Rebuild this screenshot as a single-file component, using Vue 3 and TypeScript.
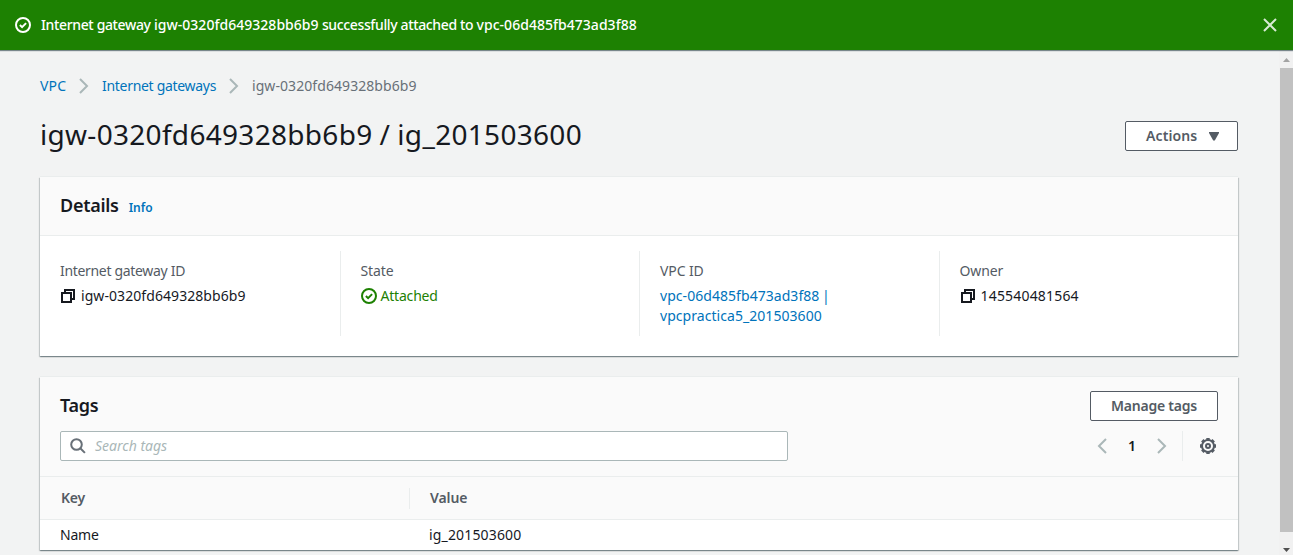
<script setup lang="ts">
interface Tag {
  key: string
  value: string
}

const gatewayId = 'igw-0320fd649328bb6b9'
const tags: Tag[] = [{ key: 'Name', value: 'ig_201503600' }]
</script>

<template>
  <div class="page">
    <div class="flash">
      <svg class="status" viewBox="0 0 16 16"><circle cx="8" cy="8" r="7" /><path d="M4.9 8l2.2 2.1 4-4" /></svg>
      <span class="flash-text">Internet gateway <span class="id">{{ gatewayId }}</span> successfully attached to <span class="id">vpc-06d485fb473ad3f88</span></span>
      <svg class="close" viewBox="0 0 14 14"><path d="M1 1l12 12M13 1L1 13" /></svg>
    </div>
    <div class="viewport">
      <main class="content">
        <nav class="crumbs">
          <a class="link c1">VPC</a>
          <svg class="sep" viewBox="0 0 10 16"><path d="M1 1l7 7-7 7" /></svg>
          <a class="link c2">Internet gateways</a>
          <svg class="sep" viewBox="0 0 10 16"><path d="M1 1l7 7-7 7" /></svg>
          <span class="c3">{{ gatewayId }}</span>
        </nav>
        <div class="title-row">
          <h1>{{ gatewayId }} / ig_201503600</h1>
          <button class="btn actions"><span>Actions</span><svg class="caret" viewBox="0 0 10 9"><path d="M0 0h10v1L5.8 8.5H4.2L0 1z" /></svg></button>
        </div>
        <section class="card">
          <header class="details-head">
            <h2>Details</h2>
            <a class="info">Info</a>
          </header>
          <div class="columns">
            <div class="col">
              <div class="label l1">Internet gateway ID</div>
              <div class="value"><svg class="copy" viewBox="0 0 14 14"><path d="M1 4h9v9H1zM4 3V1h9v9h-3" /></svg><span class="v1">{{ gatewayId }}</span></div>
            </div>
            <div class="col">
              <div class="label">State</div>
              <div class="value ok"><svg class="status" viewBox="0 0 16 16"><circle cx="8" cy="8" r="7" /><path d="M4.9 8l2.2 2.1 4-4" /></svg><span>Attached</span></div>
            </div>
            <div class="col">
              <div class="label">VPC ID</div>
              <div class="value link vpc">vpc-06d485fb473ad3f88 |<br />vpcpractica5_201503600</div>
            </div>
            <div class="col">
              <div class="label">Owner</div>
              <div class="value"><svg class="copy" viewBox="0 0 14 14"><path d="M1 4h9v9H1zM4 3V1h9v9h-3" /></svg><span class="owner">145540481564</span></div>
            </div>
          </div>
        </section>
        <section class="card tags">
          <header class="tags-head">
            <div class="head-row">
              <h2>Tags</h2>
              <button class="btn manage"><span>Manage tags</span></button>
            </div>
            <div class="tools">
              <div class="search">
                <svg class="glass" viewBox="0 0 16 16"><circle cx="6.5" cy="6.5" r="5.3" /><path d="M10.3 10.3l4.6 4.6" /></svg>
                <span>Search tags</span>
              </div>
              <div class="pager">
                <svg class="arrow" viewBox="0 0 10 16"><path d="M9 1L2 8l7 7" /></svg>
                <span class="num">1</span>
                <svg class="arrow" viewBox="0 0 10 16"><path d="M1 1l7 7-7 7" /></svg>
                <i class="rule"></i>
                <svg class="gear" viewBox="0 0 16 16">
                  <circle cx="8" cy="8" r="6" />
                  <path class="teeth" d="M8 0v2M8 14v2M0 8h2M14 8h2M2.3 2.3l1.5 1.5M12.2 12.2l1.5 1.5M13.7 2.3l-1.5 1.5M3.8 12.2l-1.5 1.5" />
                  <circle cx="8" cy="8" r="2" />
                </svg>
              </div>
            </div>
          </header>
          <div class="row head"><span class="cell">Key</span><span class="cell second">Value</span></div>
          <div v-for="tag in tags" :key="tag.key" class="row"><span class="cell">{{ tag.key }}</span><span class="cell second">{{ tag.value }}</span></div>
        </section>
      </main>
      <aside class="scrollbar">
        <svg class="tri" viewBox="0 0 7 4"><path d="M0 4h7L3.5 0z" fill="#a3a3a3" /></svg>
        <div class="thumb"></div>
        <svg class="tri" viewBox="0 0 7 4"><path d="M0 0h7L3.5 4z" fill="#505050" /></svg>
      </aside>
    </div>
  </div>
</template>

<style>
html,
body {
  overflow: hidden;
  background: #f2f3f3;
}
</style>

<style scoped>
* {
  box-sizing: border-box;
}
.page {
  width: 1293px;
  height: 555px;
  overflow: hidden;
  display: flex;
  flex-direction: column;
  background: #f2f3f3;
  color: #16191f;
  font: 14px/20px 'Noto Sans', 'Open Sans', sans-serif;
  white-space: nowrap;
}
svg {
  flex: none;
  fill: none;
  stroke: currentColor;
  stroke-width: 2;
}
.flash {
  flex: none;
  height: 50px;
  display: flex;
  align-items: center;
  padding: 0 16px 0 15px;
  background: #1d8102;
  color: #fff;
  box-shadow: 0 1px 1px rgba(0, 28, 36, 0.5);
  position: relative;
}
.flash-text {
  margin-left: 10px;
  font-weight: 500;
  letter-spacing: -0.36px;
}
.id {
  letter-spacing: 0.03px;
}
.status {
  width: 16px;
  height: 16px;
}
.close {
  width: 14px;
  height: 14px;
  margin-left: auto;
  color: #d8ead4;
}
.viewport {
  flex: 1;
  min-height: 0;
  display: flex;
}
.content {
  flex: 1;
  padding: 26px 41px 0 40px;
}
.crumbs {
  display: flex;
  align-items: center;
  height: 20px;
  color: #687078;
}
.sep {
  width: 10px;
  height: 16px;
  margin: 0 13px;
  color: #aab7b8;
}
.link {
  color: #0073bb;
}
.c1 {
  width: 26px;
  letter-spacing: 0.2px;
}
.c2 {
  width: 114px;
  letter-spacing: -0.3px;
}
.c3,
.v1 {
  letter-spacing: 0.07px;
}
.title-row {
  display: flex;
  align-items: center;
  justify-content: space-between;
  height: 36px;
  margin-top: 22px;
}
h1 {
  margin: -4px 0 0;
  font-size: 28px;
  line-height: 36px;
  font-weight: 400;
  letter-spacing: 0.3px;
  word-spacing: -0.5px;
}
h2 {
  margin: -2px 0 0;
  font-size: 18px;
  line-height: 22px;
  font-weight: 600;
  letter-spacing: -0.28px;
}
.btn {
  height: 30px;
  display: flex;
  align-items: center;
  padding: 0 20px;
  border: 1px solid #545b64;
  border-radius: 2px;
  background: #fff;
  color: #545b64;
  font: 600 14px/20px 'Noto Sans', 'Open Sans', sans-serif;
  letter-spacing: 0.1px;
}
.actions {
  width: 113px;
  justify-content: space-between;
  padding-right: 18px;
}
.caret {
  width: 10px;
  height: 9px;
  fill: currentColor;
  stroke: none;
}
.card {
  width: 1198px;
  background: #fff;
  box-shadow: 0 1px 1px 0 rgba(0, 28, 36, 0.3), 1px 1px 1px 0 rgba(0, 28, 36, 0.15), -1px 1px 1px 0 rgba(0, 28, 36, 0.15), 0 -1px 0 0 #eaeded;
  margin-top: 23px;
}
.details-head {
  display: flex;
  align-items: center;
  height: 59px;
  padding: 0 20px;
  background: #fafafa;
  border-bottom: 1px solid #eaeded;
}
.info {
  margin: 3px 0 0 10px;
  font-size: 12px;
  font-weight: 600;
  color: #0073bb;
}
.columns {
  display: grid;
  grid-template-columns: repeat(4, 1fr);
  padding: 15px 0 20px;
}
.col {
  height: 85px;
  padding: 10px 20px;
  border-left: 1px solid #eaeded;
}
.col:first-child {
  border-left: 0;
}
.label {
  color: #545b64;
  margin-bottom: 5px;
  letter-spacing: -0.1px;
}
.l1 {
  letter-spacing: -0.32px;
}
.vpc {
  letter-spacing: 0.05px;
  word-spacing: -1px;
}
.owner {
  letter-spacing: 0.18px;
}
.value .copy {
  width: 14px;
  height: 14px;
  margin: 0 6px 0 1px;
  vertical-align: -2px;
}
.ok {
  display: flex;
  align-items: center;
  gap: 4px;
  color: #1d8102;
  letter-spacing: -0.2px;
}
.tags {
  height: 173px;
  margin-top: 21px;
}
.tags-head {
  height: 100px;
  padding: 14px 20px 0;
  background: #fafafa;
  border-bottom: 1px solid #eaeded;
}
.head-row,
.tools {
  display: flex;
  align-items: center;
  justify-content: space-between;
  height: 30px;
}
.manage {
  width: 128px;
  letter-spacing: -0.22px;
}
.tools {
  margin-top: 10px;
}
.search {
  width: 728px;
  height: 30px;
  display: flex;
  align-items: center;
  padding-left: 9px;
  gap: 9px;
  border: 1px solid #aab7b8;
  border-radius: 2px;
  background: #fff;
  color: #aab7b8;
  font-style: italic;
}
.glass {
  width: 16px;
  height: 16px;
  color: #687078;
}
.pager {
  display: flex;
  align-items: center;
}
.arrow {
  width: 10px;
  height: 16px;
  color: #aab7b8;
}
.num {
  width: 50px;
  text-align: center;
  font-weight: 600;
}
.rule {
  width: 1px;
  height: 30px;
  margin: 0 17px 0 15px;
  background: #eaeded;
}
.gear {
  width: 16px;
  height: 16px;
  margin-right: 2px;
  color: #545b64;
}
.teeth {
  stroke-width: 3.4;
}
.row {
  display: flex;
  align-items: center;
  height: 30px;
}
.row .cell {
  letter-spacing: -0.2px;
}
.row .second {
  letter-spacing: 0.16px;
}
.row.head {
  height: 43px;
  background: #fafafa;
  border-bottom: 1px solid #eaeded;
  color: #545b64;
  font-weight: 600;
}
.cell {
  width: 369px;
  padding-left: 20px;
}
.head .cell {
  padding-left: 21px;
}
.row.head .second {
  height: 21px;
  padding-left: 20px;
  border-left: 1px solid #eaeded;
  letter-spacing: -0.1px;
}
.scrollbar {
  width: 14px;
  padding: 8px 0 3px 1px;
  display: flex;
  flex-direction: column;
  align-items: center;
  background: #f1f1f1;
}
.tri {
  width: 7px;
  height: 4px;
  stroke: none;
}
.thumb {
  width: 13px;
  height: 464px;
  margin: 6px 0 16px;
  background: #c1c1c1;
}
</style>
